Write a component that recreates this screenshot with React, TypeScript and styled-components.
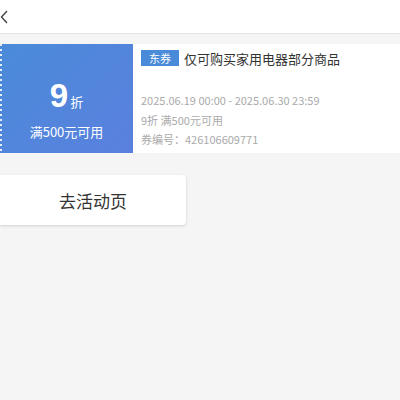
import styled, {createGlobalStyle} from 'styled-components';

const Global = createGlobalStyle`
  html, body {
    margin: 0;
    padding: 0;
    background: #f5f5f5;
    font-family: "Noto Sans CJK SC", "Liberation Sans", sans-serif;
  }
`;

const Page = styled.div`
  width: 400px;
  height: 400px;
  overflow: hidden;
  background: #f5f5f5;
`;

const Header = styled.div`
  height: 33px;
  background: #fff;
  border-bottom: 1px solid #e4e4e4;
  display: flex;
  align-items: center;
  padding-left: 0;
`;

const Back = styled.div`
  width: 12px;
  height: 20px;
  display: flex;
  align-items: center;
  svg {
    display: block;
  }
`;

const Card = styled.div`
  margin-top: 10px;
  height: 109px;
  display: flex;
  background: #fff;
`;

const Left = styled.div`
  position: relative;
  width: 133px;
  flex-shrink: 0;
  background: linear-gradient(135deg, #4a8bd9 0%, #5a80de 100%);
  color: #fff;
  display: flex;
  flex-direction: column;
  align-items: center;
  padding-top: 34px;
  box-sizing: border-box;
  &::before {
    content: '';
    position: absolute;
    left: 0;
    top: 0;
    bottom: 0;
    width: 2px;
    background: repeating-linear-gradient(to bottom, rgba(255, 255, 255, 0.85) 0 2px, transparent 2px 5px);
  }
`;

const Amount = styled.div`
  display: flex;
  align-items: baseline;
  b {
    font-family: "Liberation Sans", sans-serif;
    font-size: 33px;
    font-weight: 700;
    line-height: 36px;
  }
  span {
    font-size: 13px;
    margin-left: 2px;
  }
`;

const Cond = styled.div`
  font-size: 13px;
  margin-top: 9px;
  line-height: 18px;
`;

const Right = styled.div`
  flex: 1;
  padding: 5px 8px 0 8px;
  display: flex;
  flex-direction: column;
`;

const TitleRow = styled.div`
  display: flex;
  align-items: center;
  gap: 5px;
  height: 18px;
`;

const Tag = styled.span`
  background: #4a8bd9;
  color: #fff;
  font-size: 11px;
  line-height: 16px;
  padding: 0 8px;
`;

const Title = styled.span`
  font-size: 13px;
  color: #333;
`;

const Info = styled.div<{first?: boolean}>`
  font-size: 11px;
  color: #aaa;
  line-height: 19.5px;
  margin-top: ${p => (p.first ? '24px' : '0')};
`;

const Button = styled.div`
  margin-top: 22px;
  width: 186px;
  height: 50px;
  background: #fff;
  border-radius: 0 4px 4px 0;
  box-shadow: 0 1px 3px rgba(0, 0, 0, 0.15);
  display: flex;
  align-items: center;
  justify-content: center;
  font-size: 17px;
  color: #333;
`;

export default function App() {
  return (
    <>
      <Global />
      <Page>
        <Header>
          <Back>
            <svg width="10" height="16" viewBox="0 0 10 16">
              <path d="M7 2 L1.5 8 L7 14" stroke="#444" strokeWidth="1.4" fill="none" />
            </svg>
          </Back>
        </Header>
        <Card>
          <Left>
            <Amount>
              <b>9</b>
              <span>折</span>
            </Amount>
            <Cond>满500元可用</Cond>
          </Left>
          <Right>
            <TitleRow>
              <Tag>东券</Tag>
              <Title>仅可购买家用电器部分商品</Title>
            </TitleRow>
            <Info first>2025.06.19 00:00 - 2025.06.30 23:59</Info>
            <Info>9折 满500元可用</Info>
            <Info>券编号：426106609771</Info>
          </Right>
        </Card>
        <Button>去活动页</Button>
      </Page>
    </>
  );
}
